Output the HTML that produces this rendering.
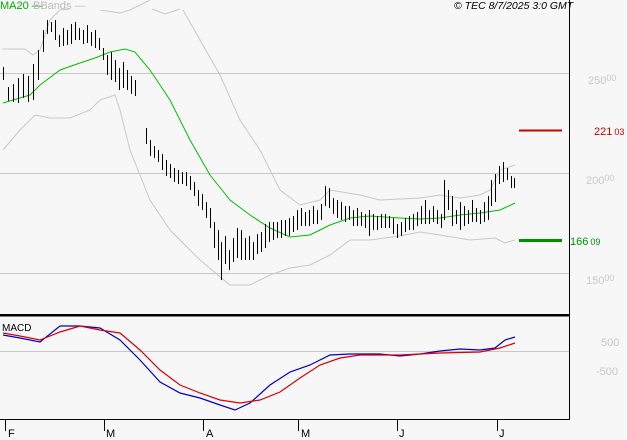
<!DOCTYPE html><html><head><style>body{margin:0;background:#f7f7f7}svg{display:block;font-family:"Liberation Sans",sans-serif}</style></head><body>
<svg width="627" height="440" xmlns="http://www.w3.org/2000/svg">
<rect width="627" height="440" fill="#f7f7f7"/>
<g stroke="#c8c8c8" stroke-width="1"><line x1="0" y1="73.5" x2="569" y2="73.5"/><line x1="0" y1="173.5" x2="569" y2="173.5"/><line x1="0" y1="273.5" x2="569" y2="273.5"/><line x1="0" y1="351.5" x2="569" y2="351.5"/></g>
<g fill="none" stroke="#c8c8c8" stroke-width="1">
<polyline points="2,49 25,49 33,55 40,50 45,35 50,20 60,10 70,9"/>
<polyline points="100,10 120,13 130,10 150,0"/>
<polyline points="152,9 165,14 180,9"/>
<polyline points="183,10 200,40 220,75 240,120 260,150 280,190 300,205 320,200 330,190 360,195 380,200 420,198 440,195 460,198 480,195 490,190 500,170 515,165"/>
<polyline points="3,150 20,130 35,115 50,118 70,118 90,110 100,100 115,95 120,110 130,150 150,200 170,230 200,260 230,285 250,285 270,275 290,268 310,265 330,255 350,240 370,240 400,236 420,232 440,235 470,240 495,238 505,243 515,240"/>
</g>
<polyline fill="none" stroke="#00c000" stroke-width="1" points="3,103 30,95 40,85 60,70 80,63 95,58 110,52 125,49 135,52 150,70 170,100 190,140 210,175 230,200 250,215 270,228 290,237 310,235 330,225 350,218 370,216 400,218 420,219 440,218 460,215 480,213 500,210 515,203"/>
<g stroke="#000" stroke-width="1" shape-rendering="crispEdges">
<path d="M3.5 67v13M8.5 87v14M13.5 84v18M18.5 78v25M23.5 74v24M28.5 76v26M33.5 64v36M38.5 50v30M43.5 30v22M47.5 20v14M51.5 22v10M55.5 20v20M59.5 35v12M63.5 28v18M67.5 30v15M71.5 24v20M75.5 22v18M79.5 28v12M83.5 30v14M87.5 25v18M91.5 32v14M95.5 30v18M99.5 38v12M103.5 48v12M107.5 55v20M111.5 52v28M115.5 60v22M119.5 68v22M123.5 62v26M127.5 70v20M131.5 76v18M135.5 80v16M146.5 128v16M150.5 140v16M154.5 146v12M158.5 150v12M162.5 154v16M166.5 160v16M170.5 164v14M174.5 168v14M178.5 170v14M182.5 172v12M186.5 172v14M190.5 176v14M194.5 182v14M198.5 190v16M202.5 194v16M206.5 202v16M210.5 208v20M214.5 222v26M218.5 230v30M221.5 242v38M225.5 236v28M229.5 250v20M233.5 238v24M237.5 228v30M241.5 230v30M245.5 238v22M249.5 236v24M253.5 242v18M257.5 234v20M261.5 232v20M265.5 224v24M269.5 222v20M273.5 222v18M277.5 222v16M281.5 220v18M285.5 220v16M289.5 218v18M293.5 216v16M297.5 210v20M301.5 208v18M305.5 212v14M309.5 210v16M313.5 206v18M317.5 210v14M321.5 204v16M325.5 186v20M329.5 188v20M333.5 198v16M337.5 200v18M341.5 202v18M345.5 206v16M349.5 206v14M353.5 210v16M357.5 208v18M361.5 212v14M365.5 214v14M369.5 210v26M373.5 214v16M377.5 216v14M381.5 214v14M385.5 214v14M389.5 216v12M393.5 218v16M397.5 224v14M401.5 222v14M405.5 218v14M409.5 216v14M413.5 214v16M417.5 212v14M421.5 206v18M425.5 200v24M429.5 210v14M433.5 206v16M437.5 210v14M441.5 214v14M444.5 180v40M448.5 190v20M452.5 196v30M456.5 210v14M460.5 202v28M464.5 206v20M468.5 210v14M472.5 200v22M476.5 208v14M480.5 210v14M484.5 202v20M488.5 196v24M491.5 180v26M495.5 174v28M499.5 166v18M503.5 162v20M507.5 168v12M511.5 176v12M514.5 178v10"/>
</g>
<g fill="none" stroke-width="1.2">
<polyline stroke="#0000cc" points="3,335 20,338 40,342 60,326 80,326 100,328 120,340 140,360 160,382 180,393 200,398 220,405 235,410 250,403 270,385 290,372 310,365 330,355 350,354 380,354 400,356 420,354 440,351 460,349 480,350 495,348 505,340 515,337"/>
<polyline stroke="#dd0000" points="3,333 20,336 40,340 60,332 80,326 100,330 120,333 140,350 160,370 180,385 200,393 220,400 240,403 260,400 280,392 300,378 320,365 340,358 360,355 400,355 440,353 480,352 500,348 515,343"/>
</g>
<rect x="0" y="314" width="570" height="2.5" fill="#000"/>
<line x1="569.5" y1="0" x2="569.5" y2="420" stroke="#000"/>
<line x1="0" y1="419.5" x2="570" y2="419.5" stroke="#000"/>
<g stroke="#000"><path d="M5.5 419v12M104.5 419v12M203.5 419v12M298.5 419v12M397.5 419v12M497.5 419v12"/></g>
<line x1="519" y1="130.5" x2="562" y2="130.5" stroke="#cc0000" stroke-width="2"/>
<line x1="519" y1="240.5" x2="562" y2="240.5" stroke="#009000" stroke-width="3"/>
<g font-size="11">
<text x="0" y="9" fill="#00b000">MA20 —</text><text x="33" y="9" fill="#bbb">BBands —</text>
<text x="454" y="9" font-style="italic" fill="#000" font-size="10.5">© TEC 8/7/2025 3:0 GMT</text>
<text x="588" y="84" fill="#c8c8c8">250<tspan font-size="9" dy="-3">00</tspan></text>
<text x="586" y="184" fill="#c8c8c8">200<tspan font-size="9" dy="-3">00</tspan></text>
<text x="586" y="284" fill="#c8c8c8">150<tspan font-size="9" dy="-3">00</tspan></text>
<text x="594" y="135" fill="#cc0000">221<tspan font-size="9" dx="2">03</tspan></text>
<text x="570" y="245" fill="#009000">166<tspan font-size="9" dx="2">09</tspan></text>
<text x="601" y="346" fill="#c8c8c8">500</text>
<text x="596" y="375" fill="#c8c8c8">-500</text>
<text x="2" y="331" fill="#000" font-size="10">MACD</text>
<g fill="#000"><text x="8" y="437">F</text><text x="106" y="437">M</text><text x="206" y="437">A</text><text x="301" y="437">M</text><text x="399" y="437">J</text><text x="499" y="437">J</text></g>
</g>
</svg></body></html>
